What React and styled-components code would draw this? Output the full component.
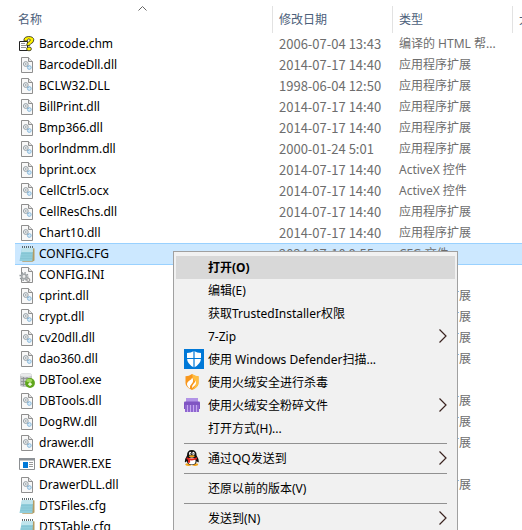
import React from 'react';
import styled, { createGlobalStyle } from 'styled-components';

const files = [
  { name: 'Barcode.chm', date: '2006-07-04 13:43', type: '编译的 HTML 帮...', icon: 'chm' },
  { name: 'BarcodeDll.dll', date: '2014-07-17 14:40', type: '应用程序扩展', icon: 'dll' },
  { name: 'BCLW32.DLL', date: '1998-06-04 12:50', type: '应用程序扩展', icon: 'dll' },
  { name: 'BillPrint.dll', date: '2014-07-17 14:40', type: '应用程序扩展', icon: 'dll' },
  { name: 'Bmp366.dll', date: '2014-07-17 14:40', type: '应用程序扩展', icon: 'dll' },
  { name: 'borlndmm.dll', date: '2000-01-24 5:01', type: '应用程序扩展', icon: 'dll' },
  { name: 'bprint.ocx', date: '2014-07-17 14:40', type: 'ActiveX 控件', icon: 'dll' },
  { name: 'CellCtrl5.ocx', date: '2014-07-17 14:40', type: 'ActiveX 控件', icon: 'dll' },
  { name: 'CellResChs.dll', date: '2014-07-17 14:40', type: '应用程序扩展', icon: 'dll' },
  { name: 'Chart10.dll', date: '2014-07-17 14:40', type: '应用程序扩展', icon: 'dll' },
  { name: 'CONFIG.CFG', date: '2024-07-10 9:55', type: 'CFG 文件', icon: 'cfg', selected: true },
  { name: 'CONFIG.INI', date: '', type: '', icon: 'ini' },
  { name: 'cprint.dll', date: '', type: '应用程序扩展', icon: 'dll' },
  { name: 'crypt.dll', date: '', type: '应用程序扩展', icon: 'dll' },
  { name: 'cv20dll.dll', date: '', type: '应用程序扩展', icon: 'dll' },
  { name: 'dao360.dll', date: '', type: '应用程序扩展', icon: 'dll' },
  { name: 'DBTool.exe', date: '', type: '', icon: 'db' },
  { name: 'DBTools.dll', date: '', type: '应用程序扩展', icon: 'dll' },
  { name: 'DogRW.dll', date: '', type: '应用程序扩展', icon: 'dll' },
  { name: 'drawer.dll', date: '', type: '应用程序扩展', icon: 'dll' },
  { name: 'DRAWER.EXE', date: '', type: '', icon: 'exe' },
  { name: 'DrawerDLL.dll', date: '', type: '应用程序扩展', icon: 'dll' },
  { name: 'DTSFiles.cfg', date: '', type: '', icon: 'cfg' },
  { name: 'DTSTable.cfg', date: '', type: '', icon: 'cfg' },
];

const menuGroups = [
  [
    { label: '打开(O)', active: true },
    { label: '编辑(E)' },
    { label: '获取TrustedInstaller权限' },
    { label: '7-Zip', more: true },
    { label: '使用 Windows Defender扫描...', icon: 'defender' },
    { label: '使用火绒安全进行杀毒', icon: 'flame' },
    { label: '使用火绒安全粉碎文件', icon: 'shredder', more: true },
    { label: '打开方式(H)...' },
  ],
  [{ label: '通过QQ发送到', icon: 'qq', more: true }],
  [{ label: '还原以前的版本(V)' }],
  [{ label: '发送到(N)', more: true }],
];

const Page = () => (
  <>
    <path d="M2.5.5h7l4 4v11h-11z" fill="#f8f8f8" stroke="#8f8f8f" />
    <path d="M9.5.5v4h4" fill="#e4e4e4" stroke="#8f8f8f" />
  </>
);

const fileIcons = {
  dll: (
    <>
      <Page />
      <circle cx="6.800" cy="7" r="2.400" fill="#e9ecee" stroke="#98a1a6" />
      <circle cx="6.800" cy="7" r=".7" fill="#7f8a90" />
      <circle cx="10.300" cy="10.500" r="1.900" fill="#d3e8f7" stroke="#8ebbdc" />
      <path d="M8.500 9l1 1" stroke="#7aa6c8" />
    </>
  ),
  chm: (
    <>
      <path d="M.5 5.500h8v9h-8z" fill="#fff" stroke="#222" />
      <path d="M2 7.500h4M2 9.500h5M2 11.500h5" stroke="#777" strokeWidth=".8" />
      <path
        d="M5 5V3Q6 .5 9.500.5q5 0 5.300 3.300 0 3-3.300 4.200-.8.500-.8 1.500h-3Q7.500 7 9.500 6 11.500 5 11.300 3.800 11 3 9.500 3 8.300 3.300 8.300 5z"
        fill="#fff200"
        stroke="#222"
        strokeWidth=".8"
      />
      <ellipse cx="10" cy="12.900" rx="2.400" ry="1.900" fill="#fff200" stroke="#222" strokeWidth=".8" />
    </>
  ),
  cfg: (
    <>
      <path d="M13.500 2l2 .5v12l-2 1.300H3" fill="#b29b63" />
      <path d="M3 2h11l-.6 13H.5z" fill="#8fcddb" />
      <path d="M3 2h11l-.2 4H2.300z" fill="#bfe4ec" />
      <path d="M2 7.500h11.500M1.700 10h11.700M1.300 12.500h12" stroke="#7fc0d0" strokeWidth=".6" />
      <path d="M3.500 0v2M5.500 0v2M7.500 0v2M9.500 0v2M11.500 0v2M13.500 0v2" stroke="#4c5a5e" strokeWidth=".9" />
    </>
  ),
  ini: (
    <>
      <Page />
      <circle cx="5" cy="9.500" r="3.800" fill="none" stroke="#8f9598" strokeWidth="1.600" strokeDasharray="1.400 1.580" />
      <circle cx="5" cy="9.500" r="2.300" fill="#eee" stroke="#a4a9ab" strokeWidth="1.800" />
      <circle cx="9.300" cy="13" r="1.500" fill="#eee" stroke="#999" strokeWidth="1.200" />
    </>
  ),
  db: (
    <>
      <path d="M1 3q0-2 6-2t6 2v10q0 2-6 2t-6-2z" fill="#c4c6c8" />
      <ellipse cx="7" cy="3" rx="6" ry="1.800" fill="#e9eaeb" />
      <path d="M2 6.500h9M2 9.500h7M2 12.500h5M4.500 5v9M8 5v9" stroke="#8a8e91" strokeWidth=".8" />
      <circle cx="11" cy="11" r="4.900" fill="#5fa51c" />
      <ellipse cx="10.200" cy="8.500" rx="3" ry="1.700" fill="#9fd95a" />
      <path d="M11 10l2.200 2.200-2.200 2-2.200-2z" fill="#eefbd8" />
    </>
  ),
  exe: (
    <>
      <path d="M.5 2.500h15v11H.5z" fill="#fff" stroke="#8c8f92" />
      <path d="M0 2h16v2.500H0z" fill="#8c9196" />
      <path d="M4 6h5v6H4z" fill="#0078d7" />
      <path d="M10 6.500h4M10 8.500h4M10 10.500h4" stroke="#999" />
    </>
  ),
};

const menuIcons = {
  defender: (
    <>
      <path d="M0 0h20v20H0z" fill="#0078d7" />
      <path d="M10 2q3 2 7 2v5q0 6-7 9.500Q3 15 3 9V4q4 0 7-2z" fill="#fff" />
      <path d="M10 2v17M3 9.500h14" stroke="#0078d7" strokeWidth="1.200" />
    </>
  ),
  flame: (
    <>
      <path d="M8 0q3 2.200 6.500 2.200V9q0 4-6.500 7Q1.500 13 1.500 9V2.200Q5 2.200 8 0z" fill="#f8971d" />
      <path d="M8 0q3 2.200 6.500 2.200V9q0 4-6.500 7 4.500-4.500 3.500-8-3-3-3.500-8z" fill="#ffbe42" />
      <path d="M8.200 3.500q2 3.500-.3 6-2.400 2-1.900 5Q2.800 12.500 3 9.800 3.200 7.800 5.500 6.500q2.300-1 2.700-3z" fill="#fff" />
      <path d="M11.300 6.500q1.800 3-.7 5.200-1.800 1-2.300 2.500-.7-2.700 1.300-4.500 1.700-1.400 1.700-3.200z" fill="#fff" />
    </>
  ),
  shredder: (
    <>
      <path d="M2 1h12v5H2z" fill="#b294e6" />
      <path d="M0 5.500Q0 4.500 1 4.500h14q1 0 1 1V12H0z" fill="#8055c3" />
      <path d="M1 8h14v7H1z" fill="#8f66cf" />
      <path d="M3.500 8v7M6.500 8v7M9.500 8v7M12.500 8v7" stroke="#c4a8f0" />
    </>
  ),
  qq: (
    <>
      <ellipse cx="4.500" cy="14.600" rx="3.200" ry="1.400" fill="#f5a418" />
      <ellipse cx="11" cy="14.600" rx="3.200" ry="1.400" fill="#f5a418" />
      <path d="M3 5.500Q3 0 7.800 0t4.800 5.500Q15 9 14.800 12q-.8.800-2-1-.6 4-5 4t-5-4q-1.200 1.800-2 1Q.6 9 3 5.500z" fill="#111" />
      <ellipse cx="7.800" cy="11" rx="3.800" ry="3.500" fill="#fff" />
      <ellipse cx="6.200" cy="3.500" rx="1.200" ry="1.700" fill="#fff" />
      <ellipse cx="9.400" cy="3.500" rx="1.200" ry="1.700" fill="#fff" />
      <circle cx="6.500" cy="3.800" r=".6" fill="#111" />
      <circle cx="9.100" cy="3.800" r=".6" fill="#111" />
      <ellipse cx="7.800" cy="6.200" rx="3" ry="1" fill="#f5a418" />
      <path d="M2.800 7.300q5 2.600 10 0l.3 2q-4 1.500-7 1v2.500H4V9.800l-1.500-.7z" fill="#e3211c" />
    </>
  ),
};

const MenuEntry = ({ item }) => (
  <MenuButton type="button" role="menuitem" $active={item.active}>
    <MenuIconBox>
      {item.icon && (
        <Icon $size={item.icon === 'defender' ? 20 : 16} viewBox={item.icon === 'defender' ? '0 0 20 20' : '0 0 16 16'}>
          {menuIcons[item.icon]}
        </Icon>
      )}
    </MenuIconBox>
    <MenuLabel>{item.label}</MenuLabel>
    {item.more && (
      <Arrow viewBox="0 0 8 14">
        <path d="M.5 .5L7 7 .5 13.500" fill="none" stroke="#3a2420" strokeWidth="1.200" />
      </Arrow>
    )}
  </MenuButton>
);

const App = () => {
  return (
    <Explorer>
      <GlobalStyle />
      <FileTable>
        <colgroup>
          <Col $width={258} />
          <Col $width={120} />
          <Col $width={120} />
          <Col $width={100} />
        </colgroup>
        <thead>
          <tr>
            <HeadCell $first aria-sort="ascending">
              名称
              <SortMark viewBox="0 0 9 5">
                <path d="M.5 4.500l4-4 4 4" fill="none" stroke="#666" />
              </SortMark>
            </HeadCell>
            <HeadCell>修改日期</HeadCell>
            <HeadCell>类型</HeadCell>
            <HeadCell>大小</HeadCell>
          </tr>
        </thead>
        <tbody>
          {files.map((file) => (
            <Row key={file.name} $selected={file.selected}>
              <NameCell>
                <NameBox>
                  <Icon $size={16} viewBox="0 0 16 16">
                    {fileIcons[file.icon]}
                  </Icon>
                  {file.name}
                </NameBox>
              </NameCell>
              <DateCell>{file.date}</DateCell>
              <InfoCell>{file.type}</InfoCell>
              <InfoCell />
            </Row>
          ))}
        </tbody>
      </FileTable>
      <ContextMenu role="menu">
        {menuGroups.map((group, i) => (
          <React.Fragment key={group[0].label}>
            {i > 0 && <Separator />}
            {group.map((item) => (
              <MenuEntry key={item.label} item={item} />
            ))}
          </React.Fragment>
        ))}
      </ContextMenu>
    </Explorer>
  );
};

export default App;

const GlobalStyle = createGlobalStyle`
  * {
    box-sizing: border-box;
  }

  body {
    margin: 0;
    background: #fff;
    font-family: 'Noto Sans', 'Noto Sans CJK SC', sans-serif;
    font-size: 12px;
  }
`;

const Explorer = styled.main`
  position: relative;
  height: 100vh;
  padding-left: 15px;
  overflow: hidden;
`;

const FileTable = styled.table`
  width: 100%;
  min-width: 598px;
  table-layout: fixed;
  border-collapse: separate;
  border-spacing: 0;
`;

const Col = styled.col`
  width: ${({ $width }) => $width}px;
`;

const HeadCell = styled.th`
  position: relative;
  height: 33px;
  padding: ${({ $first }) => ($first ? '6px 0 0 3px' : '6px 0 0 6px')};
  background: linear-gradient(#e2e2e2, #e2e2e2) right bottom / 1px 27px no-repeat;
  color: #4c607a;
  font-weight: 400;
  line-height: 20px;
  text-align: left;
`;

const SortMark = styled.svg`
  position: absolute;
  top: 6px;
  left: 50%;
  width: 9px;
  height: 5px;
  margin-left: -6px;
`;

const Row = styled.tr`
  td {
    background: ${({ $selected }) => ($selected ? '#cce8ff' : 'transparent')};
    box-shadow: ${({ $selected }) => ($selected ? 'inset 0 1px #99d1ff, 0 1px #99d1ff' : 'none')};
  }
`;

const Cell = styled.td`
  height: 21px;
  padding: 0;
  line-height: 20px;
  white-space: nowrap;
`;

const NameCell = styled(Cell)`
  color: #000;
`;

const NameBox = styled.div`
  display: flex;
  align-items: center;
  gap: 4px;
  padding-left: 4px;
`;

const InfoCell = styled(Cell)`
  padding-left: 6px;
  color: #6d6d6d;
`;

const DateCell = styled(InfoCell)`
  font-family: 'Noto Sans CJK SC', sans-serif;
  font-size: 13px;
`;

const Icon = styled.svg`
  flex: none;
  width: ${({ $size }) => $size}px;
  height: ${({ $size }) => $size}px;
`;

const ContextMenu = styled.div`
  position: absolute;
  top: 251px;
  left: 173px;
  width: 285px;
  padding: 4px 2px;
  border: 1px solid #a0a0a0;
  background: #f1f1f1;
`;

const MenuButton = styled.button`
  display: flex;
  align-items: center;
  width: 100%;
  height: 23px;
  padding: 0 8px 1px;
  border: 0;
  background: ${({ $active }) => ($active ? '#d8d8d8' : 'transparent')};
  color: #000;
  font: inherit;
  font-weight: ${({ $active }) => ($active ? 700 : 400)};
  text-align: left;
`;

const MenuIconBox = styled.span`
  display: flex;
  flex: none;
  width: 24px;
`;

const MenuLabel = styled.span`
  flex: 1;
  white-space: nowrap;
`;

const Arrow = styled.svg`
  flex: none;
  width: 8px;
  height: 14px;
`;

const Separator = styled.hr`
  height: 1px;
  margin: 3px 8px;
  border: 0;
  background: #919191;
`;
